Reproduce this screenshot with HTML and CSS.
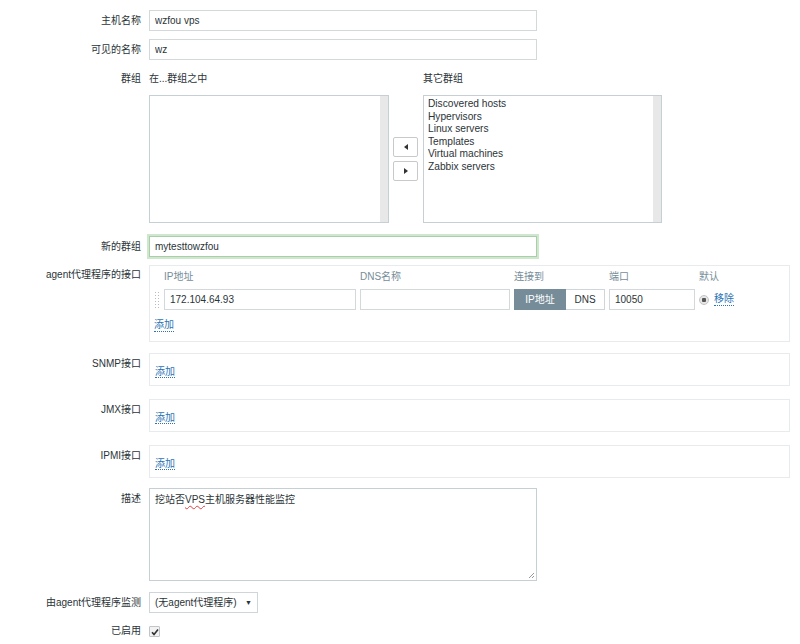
FILE: index.html
```html
<!DOCTYPE html>
<html lang="zh-CN">
<head>
    <meta charset="UTF-8">
    <title>主机</title>
    <link rel="stylesheet" href="styles.css">
</head>
<body>

<div class="form">

    <div class="row">
        <div class="lbl">主机名称</div>
        <input class="text" type="text" value="wzfou vps">
    </div>

    <div class="row r-name">
        <div class="lbl">可见的名称</div>
        <input class="text" type="text" value="wz">
    </div>

    <!-- host groups: two list boxes with move buttons -->
    <div class="row r-groups">
        <div class="lbl lbl-head">群组</div>
        <div class="groups">
            <div class="group-col">
                <div class="group-head">在...群组之中</div>
                <div class="listbox left"></div>
            </div>
            <div class="move-btns">
                <button class="arrow"><span class="tri tri-left"></span></button>
                <button class="arrow"><span class="tri tri-right"></span></button>
            </div>
            <div class="group-col">
                <div class="group-head">其它群组</div>
                <div class="listbox right">
                    <div>Discovered hosts</div>
                    <div>Hypervisors</div>
                    <div>Linux servers</div>
                    <div>Templates</div>
                    <div>Virtual machines</div>
                    <div>Zabbix servers</div>
                </div>
            </div>
        </div>
    </div>

    <div class="row r-newgroup">
        <div class="lbl">新的群组</div>
        <input class="text focused" type="text" value="mytesttowzfou">
    </div>

    <!-- interfaces -->
    <div class="row r-agent">
        <div class="lbl lbl-box">agent代理程序的接口</div>
        <div class="ifbox agent">
            <div class="if-grid">
                <span></span>
                <span class="th">IP地址</span>
                <span class="th">DNS名称</span>
                <span class="th">连接到</span>
                <span class="th">端口</span>
                <span class="th">默认</span>

                <span class="handle"></span>
                <input class="text" type="text" value="172.104.64.93">
                <input class="text" type="text" value="">
                <span class="toggle">
                    <span class="on">IP地址</span><span class="off">DNS</span>
                </span>
                <input class="text" type="text" value="10050">
                <span class="default-cell">
                    <span class="radio"></span>
                    <a class="link" href="#">移除</a>
                </span>
            </div>
            <a class="link add" href="#">添加</a>
        </div>
    </div>

    <div class="row r-if">
        <div class="lbl lbl-box2">SNMP接口</div>
        <div class="ifbox"><a class="link" href="#">添加</a></div>
    </div>

    <div class="row r-if">
        <div class="lbl lbl-box2">JMX接口</div>
        <div class="ifbox"><a class="link" href="#">添加</a></div>
    </div>

    <div class="row r-if">
        <div class="lbl lbl-box2">IPMI接口</div>
        <div class="ifbox"><a class="link" href="#">添加</a></div>
    </div>

    <div class="row r-desc">
        <div class="lbl lbl-desc">描述</div>
        <div class="textarea">挖站否<span class="typo">VPS</span>主机服务器性能监控
            <svg class="grip" width="7" height="7" viewBox="0 0 7 7">
                <path d="M6 1 L1 6 M6 4 L4 6" stroke="#999" stroke-width="1" fill="none"/>
            </svg>
        </div>
    </div>

    <div class="row r-proxy">
        <div class="lbl">由agent代理程序监测</div>
        <div class="select">(无agent代理程序)<span class="caret">▼</span></div>
    </div>

    <div class="row r-enabled">
        <div class="lbl lbl-check">已启用</div>
        <span class="checkbox">
            <svg width="8" height="8" viewBox="0 0 8 8">
                <path d="M1 4.2 L3 6.4 L7 1.4" stroke="#333" stroke-width="1.6" fill="none"/>
            </svg>
        </span>
    </div>

</div>

</body>
</html>
```

FILE: styles.css
```css
body {
    margin: 0;
    background: #fff;
    font-family: "Liberation Sans", Arial, "Noto Sans CJK SC", sans-serif;
    font-size: 10px;
    color: #2b3438;
}
.form {
    padding-top: 10px;
}
.row {
    display: flex;
    align-items: flex-start;
}
.lbl {
    width: 149px;
    flex: none;
    box-sizing: border-box;
    padding-right: 8px;
    text-align: right;
    line-height: 21px;
    white-space: nowrap;
}
.text {
    box-sizing: border-box;
    width: 388px;
    height: 21px;
    margin: 0;
    padding: 0 5px;
    border: 1px solid #d3d8db;
    background: #fff;
    font: inherit;
    color: #2b3438;
    outline: none;
}
.r-name {
    margin-top: 8px;
}

/* groups */
.r-groups {
    margin-top: 12px;
}
.lbl-head {
    line-height: 14px;
}
.groups {
    display: flex;
    align-items: flex-end;
}
.group-head {
    line-height: 14px;
    margin-bottom: 9px;
}
.listbox {
    box-sizing: border-box;
    height: 128px;
    border: 1px solid #c6cfd3;
    box-shadow: inset -8px 0 0 #e8e8e8;
    padding: 2px 4px;
    line-height: 12.5px;
    font-size: 10.2px;
}
.listbox.left {
    width: 240px;
}
.listbox.right {
    width: 239px;
}
.move-btns {
    height: 128px;
    display: flex;
    flex-direction: column;
    justify-content: center;
    gap: 4px;
    padding: 0 5px 0 4px;
}
.arrow {
    box-sizing: border-box;
    width: 25px;
    height: 20px;
    margin: 0;
    padding: 0;
    border: 1px solid #c9c9c9;
    border-radius: 2px;
    background: #fff;
    display: flex;
    align-items: center;
    justify-content: center;
}
.tri {
    width: 0;
    height: 0;
    border-top: 3px solid transparent;
    border-bottom: 3px solid transparent;
}
.tri-left {
    border-right: 4px solid #333;
}
.tri-right {
    border-left: 4px solid #333;
}

.r-newgroup {
    margin-top: 13px;
}
.text.focused {
    border-color: #a9cfa9;
    box-shadow: 0 0 0 2px #cfe6cf;
}

/* interface boxes */
.r-agent {
    margin-top: 8px;
}
.lbl-box {
    line-height: 14px;
    padding-top: 3px;
}
.ifbox {
    box-sizing: border-box;
    width: 641px;
    border: 1px solid #e7ebed;
    padding: 12px 5px 7px;
    line-height: 12px;
}
.ifbox.agent {
    padding: 5px 4px 9px;
}
.if-grid {
    display: grid;
    grid-template-columns: 6px 192px 150px 91px 86px auto;
    column-gap: 4px;
    row-gap: 6px;
    align-items: center;
}
.if-grid .text {
    width: 100%;
}
.th {
    color: #768d99;
    line-height: 12px;
}
.handle {
    height: 18px;
    background-image: radial-gradient(circle, #b3bcc0 0.9px, transparent 1px);
    background-size: 3px 3px;
}
.toggle {
    display: flex;
    height: 21px;
}
.toggle span {
    box-sizing: border-box;
    display: flex;
    align-items: center;
    justify-content: center;
}
.toggle .on {
    width: 52px;
    background: #768d99;
    color: #fff;
}
.toggle .off {
    width: 39px;
    border: 1px solid #cfd6da;
    border-left: 0;
    color: #2b3438;
}
.default-cell {
    display: flex;
    align-items: center;
    gap: 5px;
}
.radio {
    box-sizing: border-box;
    width: 10px;
    height: 10px;
    border-radius: 50%;
    border: 1px solid #c4c4c4;
    background: radial-gradient(circle, #555 0 2px, #e6e6e6 2.5px);
}
.link {
    color: #2b73b4;
    text-decoration: none;
    border-bottom: 1px dotted #2b73b4;
}
.link.add {
    display: inline-block;
    margin-top: 9px;
}
.r-if {
    margin-top: 11px;
}
.r-if + .r-if {
    margin-top: 13px;
}
.lbl-box2 {
    line-height: 14px;
    padding-top: 4px;
}

/* description */
.r-desc {
    margin-top: 10px;
}
.lbl-desc {
    line-height: 14px;
    padding-top: 4px;
}
.textarea {
    position: relative;
    box-sizing: border-box;
    width: 388px;
    height: 93px;
    border: 1px solid #c6cfd3;
    padding: 4px 5px;
    line-height: 14px;
}
.typo {
    text-decoration: underline wavy #e04040;
    text-decoration-thickness: 1px;
    text-underline-offset: 2px;
}
.grip {
    position: absolute;
    right: 1px;
    bottom: 1px;
}

.r-proxy {
    margin-top: 11px;
}
.select {
    box-sizing: border-box;
    width: 109px;
    height: 21px;
    border: 1px solid #cfd6da;
    padding: 0 5px;
    line-height: 19px;
    display: flex;
    justify-content: space-between;
}
.caret {
    font-size: 7px;
}

.r-enabled {
    margin-top: 12px;
}
.lbl-check {
    line-height: 12px;
}
.checkbox {
    box-sizing: border-box;
    width: 11px;
    height: 11px;
    margin-top: 1px;
    border: 1px solid #bfc6ca;
    border-radius: 1px;
    background: #f2f2f2;
    display: flex;
    align-items: center;
    justify-content: center;
}
```
